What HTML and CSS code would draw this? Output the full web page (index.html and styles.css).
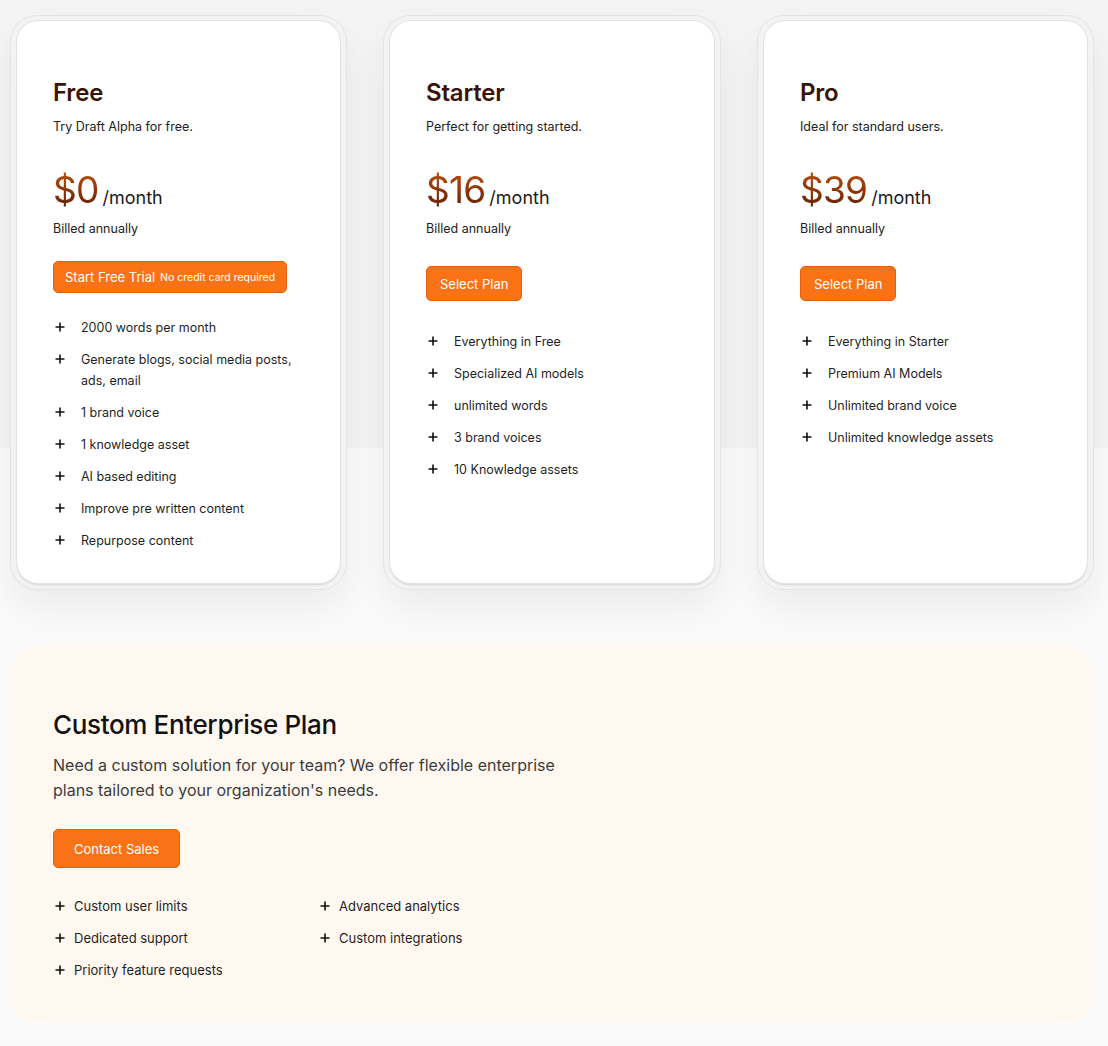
FILE: index.html
```html
<!DOCTYPE html>
<html lang="en">
<head>
<meta charset="utf-8">
<title>Pricing</title>
<link rel="stylesheet" href="styles.css">
</head>
<body>
<main class="page">
  <section class="plans">
    <div class="plan-shell">
      <div class="plan">
        <h2 class="plan-name">Free</h2>
        <p class="plan-desc">Try Draft Alpha for free.</p>
        <div class="price"><span class="amount">$0</span><span class="per">/month</span></div>
        <p class="billed">Billed annually</p>
        <a class="btn btn-trial">Start Free Trial <span class="btn-note">No credit card required</span></a>
        <ul class="features features-free">
          <li><svg class="plus" viewBox="0 0 12 12"><path d="M6 1.5v9M1.5 6h9"/></svg><span>2000 words per month</span></li>
          <li><svg class="plus" viewBox="0 0 12 12"><path d="M6 1.5v9M1.5 6h9"/></svg><span>Generate blogs, social media posts, ads, email</span></li>
          <li><svg class="plus" viewBox="0 0 12 12"><path d="M6 1.5v9M1.5 6h9"/></svg><span>1 brand voice</span></li>
          <li><svg class="plus" viewBox="0 0 12 12"><path d="M6 1.5v9M1.5 6h9"/></svg><span>1 knowledge asset</span></li>
          <li><svg class="plus" viewBox="0 0 12 12"><path d="M6 1.5v9M1.5 6h9"/></svg><span>AI based editing</span></li>
          <li><svg class="plus" viewBox="0 0 12 12"><path d="M6 1.5v9M1.5 6h9"/></svg><span>Improve pre written content</span></li>
          <li><svg class="plus" viewBox="0 0 12 12"><path d="M6 1.5v9M1.5 6h9"/></svg><span>Repurpose content</span></li>
        </ul>
      </div>
    </div>
    <div class="plan-shell">
      <div class="plan">
        <h2 class="plan-name">Starter</h2>
        <p class="plan-desc">Perfect for getting started.</p>
        <div class="price"><span class="amount">$16</span><span class="per">/month</span></div>
        <p class="billed">Billed annually</p>
        <a class="btn btn-select">Select Plan</a>
        <ul class="features">
          <li><svg class="plus" viewBox="0 0 12 12"><path d="M6 1.5v9M1.5 6h9"/></svg><span>Everything in Free</span></li>
          <li><svg class="plus" viewBox="0 0 12 12"><path d="M6 1.5v9M1.5 6h9"/></svg><span>Specialized AI models</span></li>
          <li><svg class="plus" viewBox="0 0 12 12"><path d="M6 1.5v9M1.5 6h9"/></svg><span>unlimited words</span></li>
          <li><svg class="plus" viewBox="0 0 12 12"><path d="M6 1.5v9M1.5 6h9"/></svg><span>3 brand voices</span></li>
          <li><svg class="plus" viewBox="0 0 12 12"><path d="M6 1.5v9M1.5 6h9"/></svg><span>10 Knowledge assets</span></li>
        </ul>
      </div>
    </div>
    <div class="plan-shell">
      <div class="plan">
        <h2 class="plan-name">Pro</h2>
        <p class="plan-desc">Ideal for standard users.</p>
        <div class="price"><span class="amount">$39</span><span class="per">/month</span></div>
        <p class="billed">Billed annually</p>
        <a class="btn btn-select">Select Plan</a>
        <ul class="features">
          <li><svg class="plus" viewBox="0 0 12 12"><path d="M6 1.5v9M1.5 6h9"/></svg><span>Everything in Starter</span></li>
          <li><svg class="plus" viewBox="0 0 12 12"><path d="M6 1.5v9M1.5 6h9"/></svg><span>Premium AI Models</span></li>
          <li><svg class="plus" viewBox="0 0 12 12"><path d="M6 1.5v9M1.5 6h9"/></svg><span>Unlimited brand voice</span></li>
          <li><svg class="plus" viewBox="0 0 12 12"><path d="M6 1.5v9M1.5 6h9"/></svg><span>Unlimited knowledge assets</span></li>
        </ul>
      </div>
    </div>
  </section>

  <section class="enterprise">
    <h2 class="ent-title">Custom Enterprise Plan</h2>
    <p class="ent-desc">Need a custom solution for your team? We offer flexible enterprise plans tailored to your organization's needs.</p>
    <a class="btn btn-contact">Contact Sales</a>
    <ul class="ent-features">
      <li><svg class="plus" viewBox="0 0 12 12"><path d="M6 1.5v9M1.5 6h9"/></svg><span>Custom user limits</span></li>
      <li><svg class="plus" viewBox="0 0 12 12"><path d="M6 1.5v9M1.5 6h9"/></svg><span>Advanced analytics</span></li>
      <li><svg class="plus" viewBox="0 0 12 12"><path d="M6 1.5v9M1.5 6h9"/></svg><span>Dedicated support</span></li>
      <li><svg class="plus" viewBox="0 0 12 12"><path d="M6 1.5v9M1.5 6h9"/></svg><span>Custom integrations</span></li>
      <li><svg class="plus" viewBox="0 0 12 12"><path d="M6 1.5v9M1.5 6h9"/></svg><span>Priority feature requests</span></li>
    </ul>
  </section>
</main>
</body>
</html>
```

FILE: styles.css
```css
* { box-sizing: border-box; }

html, body {
  margin: 0;
  padding: 0;
}

body {
  font-family: Inter, "Noto Sans", "Liberation Sans", sans-serif;
  color: #1a1a1a;
  background: linear-gradient(to bottom, #f4f4f4 0, #f4f4f4 448px, #fafafa 448px, #fafafa 100%);
  min-height: 1046px;
}

.page {
  padding: 15px 14px 0 10px;
}

.plans {
  display: grid;
  grid-template-columns: 337px 338px 337px;
  column-gap: 36px;
}

.plan-shell {
  background: #f3f3f3;
  border: 1px solid #e4e4e4;
  border-radius: 27px;
  padding: 5px 6px 6px 6px;
  box-shadow: 0 18px 36px rgba(0, 0, 0, 0.06);
  display: flex;
}

.plan {
  flex: 1;
  background: #ffffff;
  border-radius: 21px;
  box-shadow: 0 0 0 1px #e2e2e2, 0 2px 2px rgba(0, 0, 0, 0.12);
  padding: 56px 30px 32px 36px;
}

.plan-name {
  margin: 0;
  font-size: 24px;
  line-height: 32px;
  font-weight: 600;
  color: #3a1407;
  letter-spacing: -0.2px;
}

.plan-desc {
  margin: 8px 0 0;
  font-size: 12.5px;
  line-height: 20px;
  color: #222;
}

.price {
  margin-top: 33px;
  height: 40px;
  line-height: 40px;
  white-space: nowrap;
}

.amount {
  font-size: 37px;
  font-weight: 400;
  letter-spacing: -0.8px;
  background: linear-gradient(to bottom, #c0560f 0%, #8a3309 55%, #5a1e05 100%);
  -webkit-background-clip: text;
  background-clip: text;
  color: transparent;
}

.per {
  margin-left: 4px;
  font-size: 18px;
  line-height: 1;
  color: #1a1a1a;
  position: relative;
  top: 1px;
}

.billed {
  margin: 9px 0 0;
  font-size: 12.5px;
  line-height: 20px;
  color: #222;
}

.btn {
  display: inline-flex;
  align-items: center;
  background: #f97316;
  border: 1px solid #e4600c;
  border-radius: 5px;
  color: #fff;
  font-size: 13px;
  font-weight: 400;
  text-decoration: none;
  white-space: nowrap;
}

.btn-trial {
  margin-top: 22px;
  height: 32px;
  padding: 0 11px;
}

.btn-note {
  margin-left: 5px;
  font-size: 10.5px;
  font-weight: 400;
}

.btn-select {
  margin-top: 27px;
  height: 35px;
  padding: 0 13px;
}

.features {
  list-style: none;
  margin: 29.5px 0 0;
  padding: 0;
  display: flex;
  flex-direction: column;
  gap: 11px;
}

.features-free {
  margin-top: 23.5px;
}

.features li,
.ent-features li {
  display: flex;
  align-items: flex-start;
  font-size: 12.5px;
  line-height: 21px;
  color: #1f1f1f;
}

.ent-features li {
  font-size: 13px;
}

.plus {
  flex: none;
  width: 12px;
  height: 12px;
  margin-top: 4.5px;
  margin-left: 1px;
  fill: none;
  stroke: #111;
  stroke-width: 1.6;
}

.features .plus {
  margin-right: 15px;
}

.enterprise {
  margin-top: 56px;
  background: #fff8f1;
  border-radius: 28px;
  padding: 63px 40px 41px 43px;
}

.ent-title {
  margin: 0;
  font-size: 26px;
  line-height: 32px;
  font-weight: 500;
  color: #111;
  letter-spacing: -0.35px;
}

.ent-desc {
  margin: 12px 0 0;
  max-width: 512px;
  font-size: 16px;
  line-height: 25px;
  color: #3c3c3c;
}

.btn-contact {
  margin-top: 26.5px;
  height: 39px;
  padding: 0 20px;
}

.ent-features {
  list-style: none;
  margin: 27.5px 0 0;
  padding: 0;
  display: grid;
  grid-template-columns: 265px 265px;
  row-gap: 11px;
}

.ent-features .plus {
  margin-right: 8px;
}
```
